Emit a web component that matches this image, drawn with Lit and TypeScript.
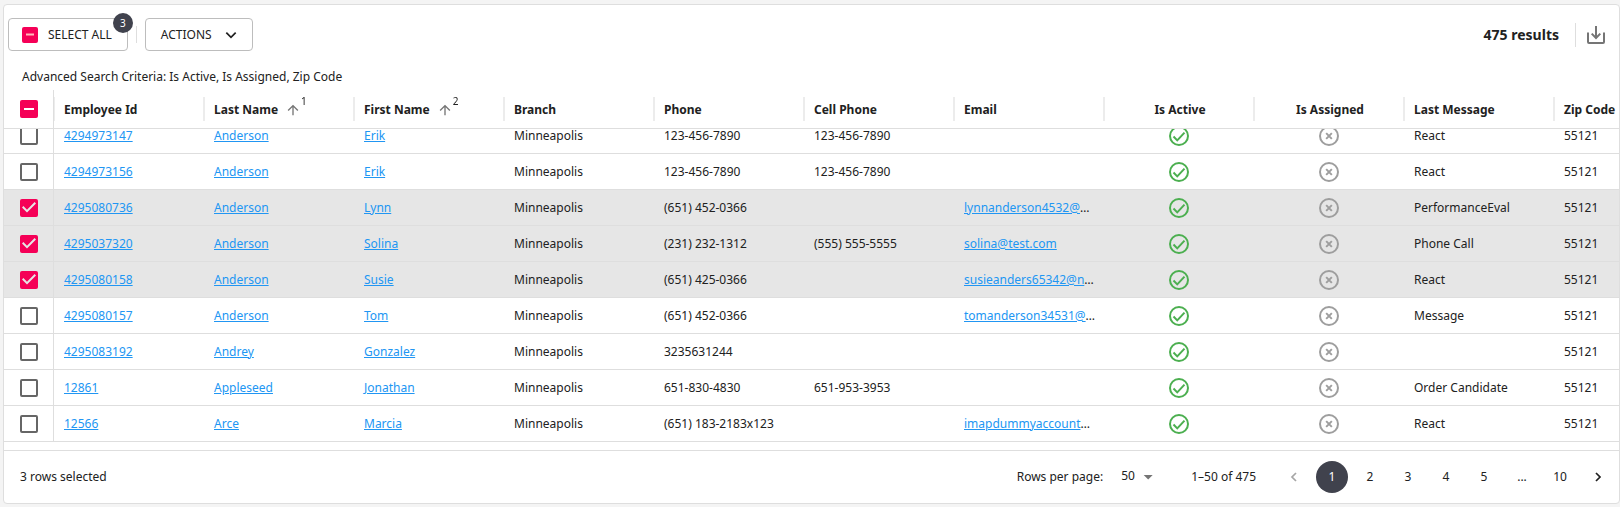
import { LitElement, html, svg, css, nothing } from "lit";
import { customElement, state } from "lit/decorators.js";
import { classMap } from "lit/directives/class-map.js";

interface Employee {
  id: string;
  last: string;
  first: string;
  phone: string;
  cell?: string;
  email?: string;
  clipped?: boolean;
  message?: string;
}

const BRANCH = "Minneapolis";
const ZIP = "55121";

const EMPLOYEES: Employee[] = [
  { id: "4294973147", last: "Anderson", first: "Erik", phone: "123-456-7890", cell: "123-456-7890", message: "React" },
  { id: "4294973156", last: "Anderson", first: "Erik", phone: "123-456-7890", cell: "123-456-7890", message: "React" },
  { id: "4295080736", last: "Anderson", first: "Lynn", phone: "(651) 452-0366", email: "lynnanderson4532@", clipped: true, message: "PerformanceEval" },
  { id: "4295037320", last: "Anderson", first: "Solina", phone: "(231) 232-1312", cell: "(555) 555-5555", email: "solina@test.com", message: "Phone Call" },
  { id: "4295080158", last: "Anderson", first: "Susie", phone: "(651) 425-0366", email: "susieanders65342@n", clipped: true, message: "React" },
  { id: "4295080157", last: "Anderson", first: "Tom", phone: "(651) 452-0366", email: "tomanderson34531@", clipped: true, message: "Message" },
  { id: "4295083192", last: "Andrey", first: "Gonzalez", phone: "3235631244" },
  { id: "12861", last: "Appleseed", first: "Jonathan", phone: "651-830-4830", cell: "651-953-3953", message: "Order Candidate" },
  { id: "12566", last: "Arce", first: "Marcia", phone: "(651) 183-2183x123", email: "imapdummyaccount", clipped: true, message: "React" },
];

const COLUMNS: { label: string; sort?: number; center?: boolean }[] = [
  { label: "Employee Id" },
  { label: "Last Name", sort: 1 },
  { label: "First Name", sort: 2 },
  { label: "Branch" },
  { label: "Phone" },
  { label: "Cell Phone" },
  { label: "Email" },
  { label: "Is Active", center: true },
  { label: "Is Assigned", center: true },
  { label: "Last Message" },
  { label: "Zip Code" },
];

const icon = (cls: string, body: unknown) =>
  html`<svg class="icon ${cls}" viewBox="0 0 24 24" aria-hidden="true">${body}</svg>`;

const activeIcon = icon("active", svg`<circle cx="12" cy="12" r="10.8"/><path d="M5.4 12.6l4.5 4.6L18.6 8"/>`);
const assignedIcon = icon("assigned", svg`<circle cx="12" cy="12" r="10.8"/><path d="M8.6 8.6l6.8 6.8M15.4 8.6l-6.8 6.8"/>`);
const arrowUp = icon("sort-arrow", svg`<path d="M4 12l1.41 1.41L11 7.83V20h2V7.83l5.58 5.59L20 12l-8-8-8 8z"/>`);
const downloadIcon = html`<svg class="icon" viewBox="0 0 18 18" aria-hidden="true">
  <path d="M1 6.5V16q0 1 1 1h14q1 0 1-1V6.5M9 0v12M4.7 7.6L9 12l4.3-4.4" />
</svg>`;

@customElement("app-root")
export class AppRoot extends LitElement {
  @state() private selected = new Set(["4295080736", "4295037320", "4295080158"]);

  static styles = css`
    :host {
      display: block;
      box-sizing: border-box;
      height: 100vh;
      padding: 4px 0 3px 3px;
      background: #f4f4f4;
      color: #212121;
      font: 12px/16px "Noto Sans", sans-serif;
    }
    * { box-sizing: border-box; }
    button, select, input { font: inherit; color: inherit; margin: 0; }
    button { cursor: pointer; }
    .icon { display: block; fill: currentColor; }
    .card {
      display: flex;
      flex-direction: column;
      height: 100%;
      border: 1px solid #dedede;
      border-radius: 4px;
      background: #fff;
      overflow: hidden;
    }
    .toolbar {
      display: flex;
      align-items: center;
      flex: none;
      padding: 13px 14px 0 4px;
    }
    .outlined {
      display: flex;
      align-items: center;
      height: 33px;
      border: 1px solid #bdbdbd;
      border-radius: 4px;
      background: #fff;
    }
    .select-all { position: relative; gap: 10px; padding: 0 15px 0 13px; cursor: pointer; }
    .badge {
      position: absolute;
      top: -6px;
      right: -6px;
      width: 20px;
      height: 20px;
      border-radius: 50%;
      background: #40424d;
      color: #fff;
      font-size: 10px;
      line-height: 20px;
      text-align: center;
    }
    .actions { gap: 12px; padding: 0 14px 0 15px; }
    .chevron { width: 14px; height: 14px; fill: none; stroke: currentColor; stroke-width: 3; }
    .rule { width: 1px; height: 17px; margin: 0 8px; background: #dedede; }
    .rule.tall { height: 24px; margin: 0 11px 0 16px; }
    .results { margin-left: auto; font-size: 14px; font-weight: 700; }
    .download { padding: 0; border: 0; background: none; color: #757575; }
    .download .icon { width: 18px; height: 18px; fill: none; stroke: currentColor; stroke-width: 2; }
    .criteria { flex: none; margin: 0; padding: 18px 18px 5px; }

    .check {
      display: block;
      appearance: none;
      width: 18px;
      height: 18px;
      border: 2px solid #666;
      border-radius: 2px;
      cursor: pointer;
    }
    .check:checked, .check:indeterminate { border: 0; background: #f50057; }
    .check:checked::before, .check:indeterminate::before {
      content: "";
      display: block;
      width: 18px;
      height: 18px;
      background: #e6e6e6;
      clip-path: polygon(7px 14px, 2px 9px, 3.4px 7.6px, 7px 11.2px, 14.6px 3.6px, 16px 5px);
    }
    .check:indeterminate::before {
      background: #fff;
      clip-path: polygon(4px 8px, 14px 8px, 14px 10px, 4px 10px);
    }
    .check.small, .check.small::before { width: 16px; height: 16px; }
    .check.small::before {
      background: #fbb;
      clip-path: polygon(4px 7px, 12px 7px, 12px 9px, 4px 9px);
    }

    .grid {
      flex: 1;
      min-height: 0;
      overflow: auto;
      scrollbar-width: none;
      padding-bottom: 8px;
    }
    table {
      width: 1700px;
      min-width: 100%;
      table-layout: fixed;
      border-collapse: separate;
      border-spacing: 0;
    }
    .pick-col { width: 50px; }
    th, td {
      height: 36px;
      padding: 0 8px 0 10px;
      border-bottom: 1px solid #dedede;
      text-align: left;
      white-space: nowrap;
      overflow: hidden;
      text-overflow: ellipsis;
    }
    .mark { padding: 0 10px; }
    th {
      position: sticky;
      top: 0;
      z-index: 1;
      height: 39px;
      background: #fff;
      font-weight: 700;
      overflow: visible;
    }
    th:not(.pick) { padding-top: 2px; }
    th:not(.pick)::before {
      content: "";
      position: absolute;
      left: -1px;
      top: 7px;
      width: 2px;
      height: 24px;
      background: #ececec;
    }
    .pick { padding: 0 15px 0 16px; border-right: 1px solid #dedede; }
    th.pick { z-index: 2; }
    .head { display: flex; align-items: center; }
    .head.center { justify-content: center; }
    .sort-arrow { width: 16px; height: 16px; margin-left: 7px; color: #757575; }
    .order { align-self: flex-start; margin-top: -9px; font-size: 10px; font-weight: 400; }
    .picked td { background: #e6e6e6; }
    a { color: #2196f3; text-decoration: underline; }
    .active, .assigned {
      width: 20px;
      height: 20px;
      margin: 0 auto;
      fill: none;
      stroke: #4caf50;
      stroke-width: 2.4;
    }
    .assigned { stroke: #9e9e9e; }

    .footer {
      display: flex;
      align-items: center;
      flex: none;
      height: 53px;
      padding: 0 5px 0 16px;
      border-top: 1px solid #dedede;
    }
    .paging { display: flex; align-items: center; margin-left: auto; }
    .per-page { display: flex; align-items: center; gap: 18px; }
    .select-box { display: grid; align-items: center; }
    .select-box > * { grid-area: 1 / 1; }
    .select-box select {
      appearance: none;
      width: 32px;
      height: 24px;
      padding: 0 0 2px;
      border: 0;
      border-radius: 0;
      background: none;
    }
    .caret {
      justify-self: end;
      width: 10px;
      height: 5px;
      background: #757575;
      clip-path: polygon(0 0, 100% 0, 50% 100%);
      pointer-events: none;
    }
    .range { margin: 0 22px 0 38px; }
    .pages { display: flex; gap: 6px; }
    .page {
      display: grid;
      place-items: center;
      width: 32px;
      height: 32px;
      padding: 0;
      border: 0;
      border-radius: 50%;
      background: none;
    }
    .page.current { background: #40424d; color: #fff; }
    .page:disabled { color: #a6a6a6; }
    .page .icon { width: 16px; height: 16px; fill: none; stroke: currentColor; stroke-width: 2.6; }
  `;

  firstUpdated() {
    const grid = this.renderRoot.querySelector(".grid")!;
    grid.scrollTop = grid.scrollHeight;
  }

  private toggle(id: string) {
    const next = new Set(this.selected);
    next.has(id) ? next.delete(id) : next.add(id);
    this.selected = next;
  }

  private toggleAll() {
    this.selected = this.selected.size ? new Set() : new Set(EMPLOYEES.map((e) => e.id));
  }

  private row(e: Employee) {
    const picked = this.selected.has(e.id);
    return html`<tr class=${classMap({ picked })}>
      <td class="pick">
        <input class="check" type="checkbox" aria-label=${`Select ${e.id}`} .checked=${picked} @change=${() => this.toggle(e.id)} />
      </td>
      <td><a href="#">${e.id}</a></td>
      <td><a href="#">${e.last}</a></td>
      <td><a href="#">${e.first}</a></td>
      <td>${BRANCH}</td>
      <td>${e.phone}</td>
      <td>${e.cell ?? nothing}</td>
      <td>${e.email ? html`<a href="#">${e.email}</a>${e.clipped ? "…" : nothing}` : nothing}</td>
      <td class="mark">${activeIcon}</td>
      <td class="mark">${assignedIcon}</td>
      <td>${e.message ?? nothing}</td>
      <td>${ZIP}</td>
    </tr>`;
  }

  render() {
    const count = this.selected.size;
    return html`<main class="card">
      <div class="toolbar">
        <label class="outlined select-all">
          <input class="check small" type="checkbox" .indeterminate=${count > 0} @change=${this.toggleAll} />
          SELECT ALL
          <span class="badge">${count}</span>
        </label>
        <span class="rule"></span>
        <button class="outlined actions">
          ACTIONS ${icon("chevron", svg`<path d="M4 8l8 8 8-8"/>`)}
        </button>
        <span class="results">475 results</span>
        <span class="rule tall"></span>
        <button class="download" aria-label="Download">${downloadIcon}</button>
      </div>
      <p class="criteria">Advanced Search Criteria: Is Active, Is Assigned, Zip Code</p>
      <div class="grid">
        <table>
          <colgroup><col class="pick-col" />${COLUMNS.map(() => html`<col />`)}</colgroup>
          <thead>
            <tr>
              <th class="pick">
                <input class="check" type="checkbox" aria-label="Select all rows" .indeterminate=${count > 0} @change=${this.toggleAll} />
              </th>
              ${COLUMNS.map(
                (c) => html`<th scope="col">
                  <div class=${classMap({ head: true, center: !!c.center })}>
                    ${c.label}${c.sort ? html`${arrowUp}<span class="order">${c.sort}</span>` : nothing}
                  </div>
                </th>`
              )}
            </tr>
          </thead>
          <tbody>${EMPLOYEES.map((e) => this.row(e))}</tbody>
        </table>
      </div>
      <footer class="footer">
        <span>${count} rows selected</span>
        <div class="paging">
          <div class="per-page">
            <label for="size">Rows per page:</label>
            <span class="select-box">
              <select id="size"><option>50</option></select>
              <span class="caret"></span>
            </span>
          </div>
          <span class="range">1–50 of 475</span>
          <nav class="pages" aria-label="Pages">
            <button class="page" aria-label="Previous page" disabled>${icon("", svg`<path d="M15 6l-6 6 6 6"/>`)}</button>
            <button class="page current" aria-current="page">1</button>
            ${[2, 3, 4, 5].map((n) => html`<button class="page">${n}</button>`)}
            <span class="page">...</span>
            <button class="page">10</button>
            <button class="page" aria-label="Next page">${icon("", svg`<path d="M9 6l6 6-6 6"/>`)}</button>
          </nav>
        </div>
      </footer>
    </main>`;
  }
}
